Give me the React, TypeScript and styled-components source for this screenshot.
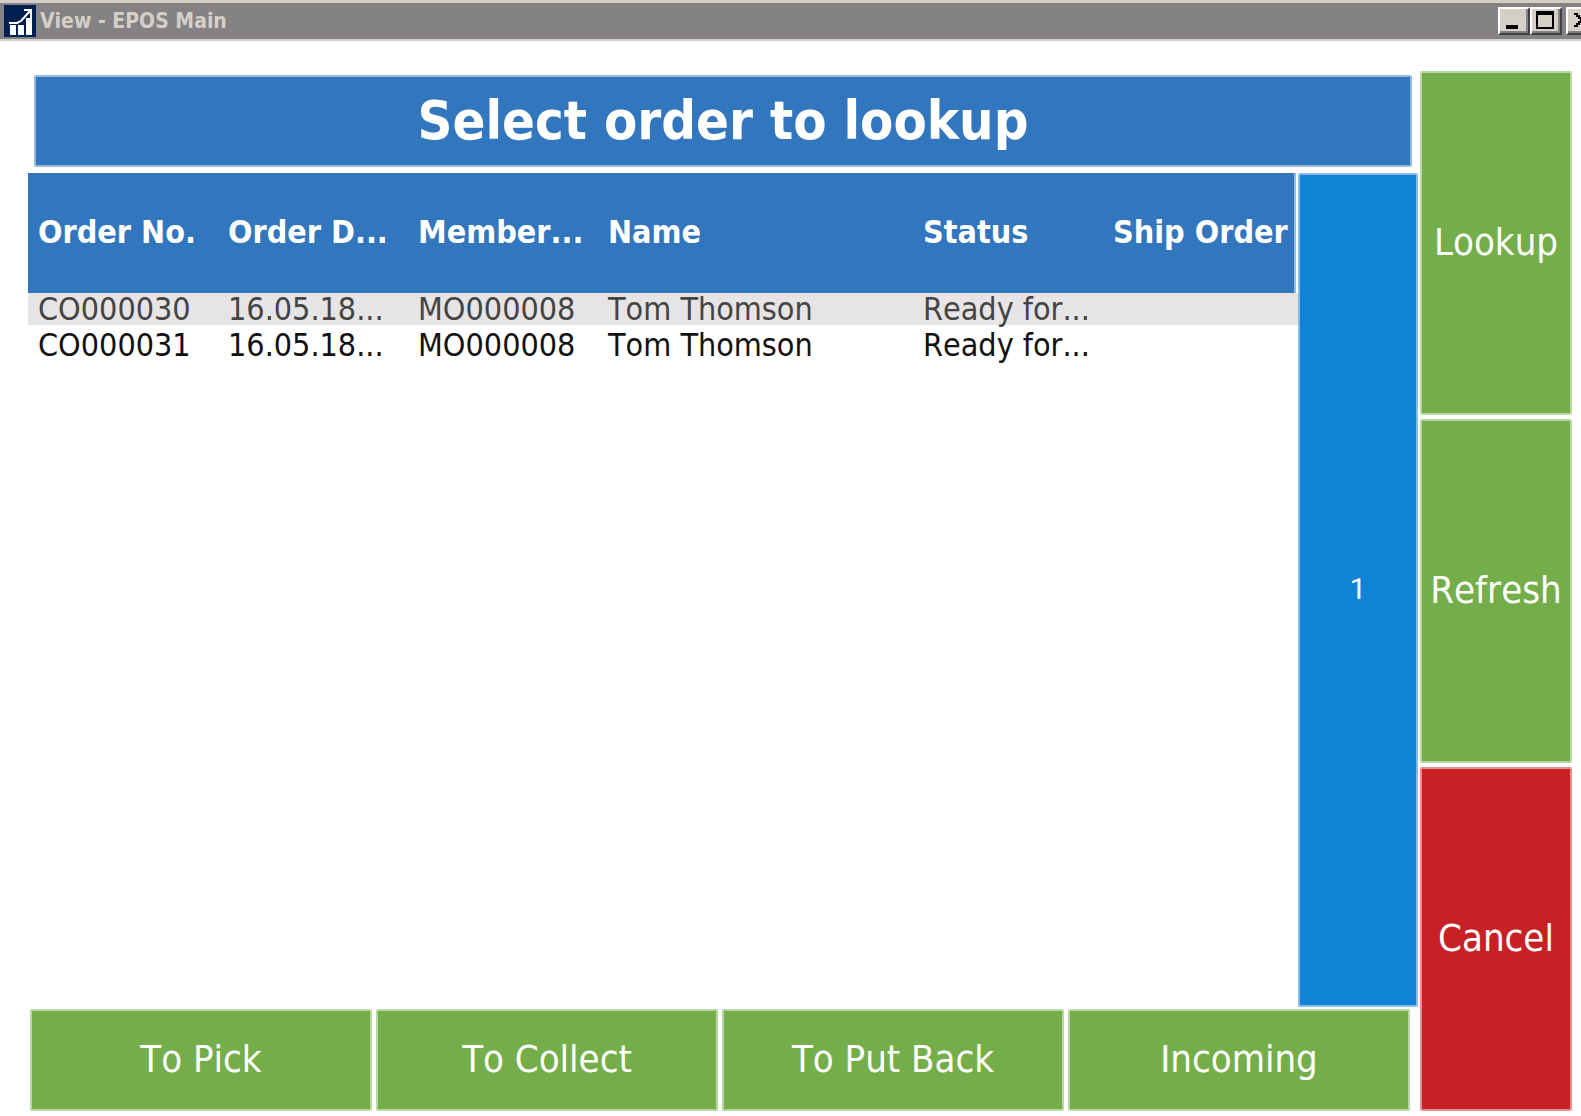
import React from "react";
import styled, { createGlobalStyle } from "styled-components";

const colors = {
  chrome: "#d4d0c8",
  titleBar: "#848284",
  header: "#3276bd",
  headerEdge: "#98badf",
  page: "#1083d7",
  pageEdge: "#84bdea",
  green: "#74ae4a",
  greenEdge: "#b9d7a4",
  red: "#c72025",
  redEdge: "#e39093",
};

const GlobalStyle = createGlobalStyle`
  *, *::before, *::after { box-sizing: border-box; }
  body {
    margin: 0;
    background: #fff;
    font-family: Tahoma, "DejaVu Sans Condensed", "DejaVu Sans", sans-serif;
    font-kerning: none;
  }
`;

const Window = styled.div`
  display: flex;
  flex-direction: column;
  min-height: 100vh;
  overflow: hidden;
`;

const TitleBar = styled.header`
  display: flex;
  align-items: center;
  gap: 4px;
  height: 41px;
  padding-left: 4px;
  background: ${colors.titleBar};
  border-top: 3px solid ${colors.chrome};
  border-bottom: 2px solid ${colors.chrome};
  overflow: hidden;
`;

const WindowTitle = styled.span`
  flex: 1;
  color: ${colors.chrome};
  font-size: 21px;
  font-weight: 700;
  line-height: 34px;
  white-space: nowrap;
`;

const WindowControls = styled.div`
  display: flex;
  flex-shrink: 0;
  margin-right: -17px;
`;

const ControlButton = styled.button<{ $spaced?: boolean }>`
  width: 32px;
  height: 28px;
  margin-left: ${(p) => (p.$spaced ? 4 : 0)}px;
  padding: 0;
  border: 2px solid;
  border-color: #fff #424142 #424142 #fff;
  background: ${colors.chrome};
  box-shadow: inset -2px -2px 0 #848284;

  svg {
    display: block;
  }
`;

const Main = styled.main`
  flex: 1;
  display: grid;
  grid-template-columns: minmax(0, 1fr) 152px;
  gap: 2px;
  padding: 30px 9px 5px 28px;
`;

const Orders = styled.section`
  display: flex;
  flex-direction: column;
  padding-top: 4px;
`;

const Banner = styled.h1`
  margin: 0 6px 6px;
  height: 92px;
  border: 2px solid ${colors.headerEdge};
  border-radius: 2px;
  background: ${colors.header};
  color: #fff;
  font-size: 54px;
  font-weight: 700;
  line-height: 88px;
  text-align: center;
`;

const ListArea = styled.div`
  flex: 1;
  display: flex;
  align-items: stretch;
`;

const TableWrap = styled.div`
  flex: 1;
  min-width: 0;
`;

const OrderTable = styled.table`
  width: 100%;
  table-layout: fixed;
  border-collapse: separate;
  border-spacing: 0;
  font-size: 32px;
  line-height: 32px;
`;

const Col = styled.col<{ $width?: number }>`
  width: ${(p) => (p.$width ? `${p.$width}px` : "auto")};
`;

const HeadCell = styled.th`
  height: 120px;
  padding: 0 0 2px 10px;
  background: ${colors.header};
  color: #fff;
  font-weight: 700;
  text-align: left;
  white-space: nowrap;

  &:last-child {
    background: linear-gradient(
      to left,
      #fff 2px,
      ${colors.headerEdge} 2px 4px,
      ${colors.header} 4px
    );
  }
`;

const OrderRow = styled.tr<{ $selected?: boolean }>`
  height: 36px;
  background: ${(p) => (p.$selected ? "#e6e4e5" : "#fff")};
  color: ${(p) => (p.$selected ? "#444" : "#111")};
`;

const Cell = styled.td`
  padding: 0 0 0 10px;
  border-bottom: 4px solid #fff;
  white-space: nowrap;
`;

const tones = {
  green: [colors.green, colors.greenEdge],
  red: [colors.red, colors.redEdge],
  blue: [colors.page, colors.pageEdge],
};

const PosButton = styled.button<{ $tone: keyof typeof tones }>`
  min-width: 0;
  padding: 0 0 2px;
  border: 2px solid ${(p) => tones[p.$tone][1]};
  border-radius: 2px;
  background: ${(p) => tones[p.$tone][0]};
  color: #fff;
  font-family: inherit;
  font-size: 38px;
  font-kerning: none;
  line-height: 46px;
`;

const PageButton = styled(PosButton)`
  width: 120px;
  font-family: Roboto, sans-serif;
  font-size: 30px;
`;

const Filters = styled.nav`
  display: grid;
  grid-template-columns: repeat(4, minmax(0, 1fr));
  gap: 4px;
  height: 102px;
  margin: 2px 8px 0 2px;
`;

const Actions = styled.aside`
  display: grid;
  grid-template-rows: repeat(3, minmax(0, 1fr));
  gap: 4px;
`;

const AppIcon = () => (
  <svg width="32" height="32" viewBox="0 0 32 32" aria-hidden="true">
    <rect width="32" height="32" fill="#002050" />
    <path d="M6 20h6v10H6zM14 20h6v10h-6zM22 13h6v17h-6z" fill="#fff" />
    <path d="M5 18h8l4-2 9-10" fill="none" stroke="#fff" strokeWidth="2" />
    <path d="M20 4h8v9h-2V6h-6z" fill="#fff" />
  </svg>
);

const orders = [
  { no: "CO000030", date: "16.05.18...", member: "MO000008", name: "Tom Thomson", status: "Ready for...", ship: "" },
  { no: "CO000031", date: "16.05.18...", member: "MO000008", name: "Tom Thomson", status: "Ready for...", ship: "" },
];

const columns = [
  { label: "Order No.", width: 190 },
  { label: "Order D...", width: 190 },
  { label: "Member...", width: 190 },
  { label: "Name" },
  { label: "Status", width: 190 },
  { label: "Ship Order", width: 195 },
];

export default function App() {
  return (
    <Window>
      <GlobalStyle />
      <TitleBar>
        <AppIcon />
        <WindowTitle>View - EPOS Main</WindowTitle>
        <WindowControls>
          <ControlButton aria-label="Minimize">
            <svg width="28" height="24" viewBox="0 0 28 24">
              <path d="M6 16h12v4H6z" />
            </svg>
          </ControlButton>
          <ControlButton aria-label="Maximize">
            <svg width="28" height="24" viewBox="0 0 28 24">
              <path fillRule="evenodd" d="M4 2h18v18H4zM6 6h14v12H6z" />
            </svg>
          </ControlButton>
          <ControlButton aria-label="Close" $spaced>
            <svg width="28" height="24" viewBox="0 0 28 24">
              <path d="M6 4h4v2h2v2h4v-2h2v-2h4v2h-2v2h-2v2h-2v2h2v2h2v2h2v2h-4v-2h-2v-2h-4v2h-2v2H6v-2h2v-2h2v-2h2v-2h-2V8H8V6H6z" />
            </svg>
          </ControlButton>
        </WindowControls>
      </TitleBar>
      <Main>
        <Orders>
          <Banner>Select order to lookup</Banner>
          <ListArea>
            <TableWrap>
              <OrderTable>
                <colgroup>
                  {columns.map((c) => (
                    <Col key={c.label} $width={c.width} />
                  ))}
                </colgroup>
                <thead>
                  <tr>
                    {columns.map((c) => (
                      <HeadCell key={c.label} scope="col">
                        {c.label}
                      </HeadCell>
                    ))}
                  </tr>
                </thead>
                <tbody>
                  {orders.map((o, i) => (
                    <OrderRow key={o.no} $selected={i === 0}>
                      <Cell>{o.no}</Cell>
                      <Cell>{o.date}</Cell>
                      <Cell>{o.member}</Cell>
                      <Cell>{o.name}</Cell>
                      <Cell>{o.status}</Cell>
                      <Cell>{o.ship}</Cell>
                    </OrderRow>
                  ))}
                </tbody>
              </OrderTable>
            </TableWrap>
            <PageButton $tone="blue">1</PageButton>
          </ListArea>
          <Filters>
            <PosButton $tone="green">To Pick</PosButton>
            <PosButton $tone="green">To Collect</PosButton>
            <PosButton $tone="green">To Put Back</PosButton>
            <PosButton $tone="green">Incoming</PosButton>
          </Filters>
        </Orders>
        <Actions>
          <PosButton $tone="green">Lookup</PosButton>
          <PosButton $tone="green">Refresh</PosButton>
          <PosButton $tone="red">Cancel</PosButton>
        </Actions>
      </Main>
    </Window>
  );
}
